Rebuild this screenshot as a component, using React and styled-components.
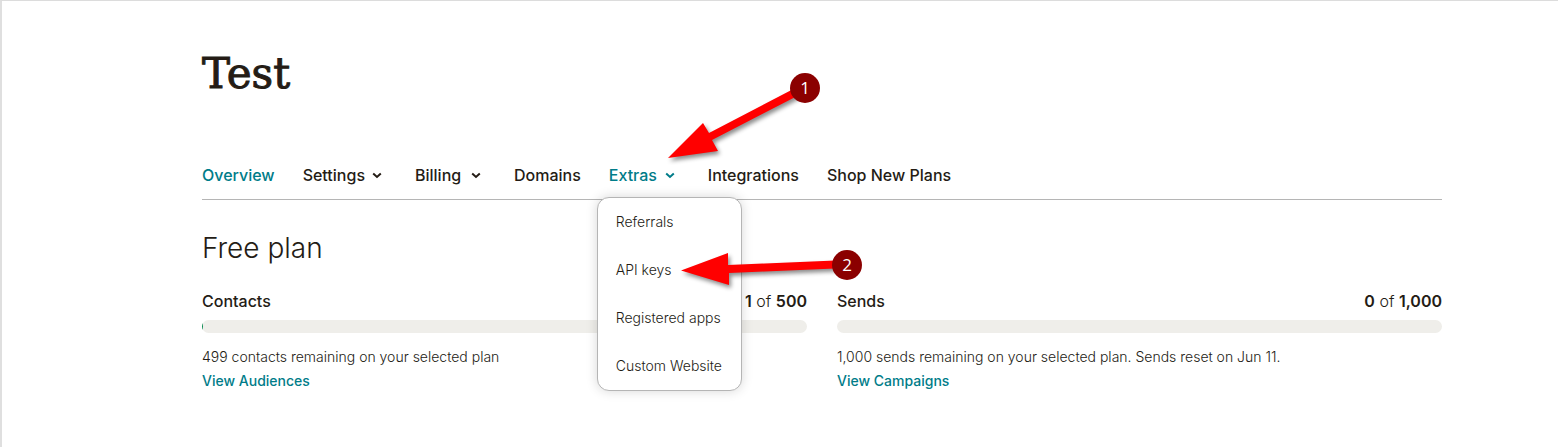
import React from "react";
import styled, { createGlobalStyle } from "styled-components";

const Global = createGlobalStyle`
  * { box-sizing: border-box; }
  body {
    margin: 0;
    background: #fff;
    color: #241c15;
    font-family: Inter, "Liberation Sans", sans-serif;
    font-size: 14px;
    line-height: 24px;
  }
`;

const Page = styled.div`
  position: relative;
  min-height: 100vh;
  border-top: 1px solid #dcdcdc;
  border-left: 2px solid #dfdfdf;
  padding: 45px 116px 48px 200px;
`;

const Title = styled.h1`
  margin: 0;
  font-family: "DejaVu Serif", serif;
  font-size: 42px;
  font-weight: 400;
  line-height: 56px;
  -webkit-text-stroke: 1px currentColor;
`;

const Nav = styled.nav`
  display: flex;
  gap: 28px;
  margin-top: 49px;
  border-bottom: 1px solid #b5b5b5;
  height: 49px;
`;

const tab = `
  font: 500 16px/24px Inter, "Liberation Sans", sans-serif;
  height: 48px;
  padding: 12px 0;
  white-space: nowrap;
`;

const TabLink = styled.a`
  ${tab}
  text-decoration: none;
  color: ${(p) => (p.$active ? "#007c89" : "#241c15")};
`;

const TabGroup = styled.div`
  position: relative;
`;

const TabButton = styled.button`
  ${tab}
  display: flex;
  align-items: center;
  justify-content: space-between;
  gap: 7px;
  min-width: 71px;
  padding-right: 5px;
  border: 0;
  background: none;
  color: ${(p) => (p.$active ? "#007c89" : "#241c15")};
`;

const Menu = styled.ul`
  position: absolute;
  z-index: 2;
  top: 46px;
  left: -12px;
  width: 145px;
  margin: 0;
  padding: 0;
  list-style: none;
  background: #fff;
  border: 1px solid #b5b5b5;
  border-radius: 12px;
  box-shadow: 0 0 12px rgba(0, 0, 0, 0.16);
`;

const MenuLink = styled.a`
  display: block;
  padding: 12px 0 12px 18px;
  color: #241c15;
  font-weight: 300;
  text-decoration: none;
  white-space: nowrap;
`;

const PlanName = styled.h2`
  margin: 28px 0 0;
  font-size: 28px;
  font-weight: 300;
  line-height: 40px;
`;

const Meters = styled.div`
  display: grid;
  grid-template-columns: 1fr 1fr;
  gap: 30px;
  margin-top: 21px;
`;

const MeterHead = styled.div`
  display: flex;
  justify-content: space-between;
  font-size: 16px;
`;

const MeterTitle = styled.h3`
  margin: 0;
  font-size: 16px;
  font-weight: 500;
`;

const Count = styled.span`
  font-weight: 300;
  b { font-weight: 600; }
`;

const Track = styled.div`
  height: 13px;
  margin: 7px 0 12px;
  border-radius: 7px;
  background: #efeeea;
  overflow: hidden;
`;

const Fill = styled.div`
  height: 100%;
  background: #00874a;
`;

const Note = styled.p`
  margin: 0;
  font-weight: 300;
`;

const MoreLink = styled.a`
  font-weight: 500;
  color: #007c89;
  text-decoration: none;
`;

const Arrows = styled.svg`
  position: absolute;
  z-index: 3;
  top: -1px;
  left: -2px;
  pointer-events: none;
  filter: drop-shadow(2px 3px 2px rgba(0, 0, 0, 0.45));
`;

const Step = styled.span`
  position: absolute;
  z-index: 4;
  left: ${(p) => p.$x}px;
  top: ${(p) => p.$y}px;
  width: 30px;
  height: 30px;
  border-radius: 50%;
  background: #8b0000;
  color: #fff;
  font: 400 17px/29px "Open Sans", sans-serif;
  text-align: center;
`;

const Chevron = () => (
  <svg width="10" height="8" viewBox="0 0 10 8" fill="none" stroke="currentColor" strokeWidth="2" aria-hidden="true">
    <path d="M1.2 2.4l3.8 3.5L8.8 2.4" />
  </svg>
);

const menuItems = ["Referrals", "API keys", "Registered apps", "Custom Website"];

const Meter = ({ title, used, total, note, more }) => (
  <section>
    <MeterHead>
      <MeterTitle>{title}</MeterTitle>
      <Count><b>{used}</b> of <b>{total.toLocaleString("en-US")}</b></Count>
    </MeterHead>
    <Track>
      <Fill style={{ width: `${(used / total) * 100}%` }} />
    </Track>
    <Note>{note}</Note>
    <MoreLink href="#">{more}</MoreLink>
  </section>
);

export default function App() {
  return (
    <>
      <Global />
      <Page>
        <Title>Test</Title>
        <Nav>
          <TabLink href="#" $active>Overview</TabLink>
          <TabButton>Settings<Chevron /></TabButton>
          <TabButton>Billing<Chevron /></TabButton>
          <TabLink href="#">Domains</TabLink>
          <TabGroup>
            <TabButton $active aria-expanded="true">Extras<Chevron /></TabButton>
            <Menu>
              {menuItems.map((m) => (
                <li key={m}><MenuLink href="#">{m}</MenuLink></li>
              ))}
            </Menu>
          </TabGroup>
          <TabLink href="#">Integrations</TabLink>
          <TabLink href="#">Shop New Plans</TabLink>
        </Nav>
        <PlanName>Free plan</PlanName>
        <Meters>
          <Meter title="Contacts" used={1} total={500} note="499 contacts remaining on your selected plan" more="View Audiences" />
          <Meter title="Sends" used={0} total={1000} note="1,000 sends remaining on your selected plan. Sends reset on Jun 11." more="View Campaigns" />
        </Meters>
        <Arrows width="880" height="320" viewBox="0 0 880 320" fill="#f00" aria-hidden="true">
          <path d="M668 158L703 123L709 133L803 84L807 91L712 140L718 151Z" />
          <path d="M681 270.5L728 253V265L847 260V268L729 273V285Z" />
        </Arrows>
        <Step $x={788} $y={72}>1</Step>
        <Step $x={830} $y={249}>2</Step>
      </Page>
    </>
  );
}
